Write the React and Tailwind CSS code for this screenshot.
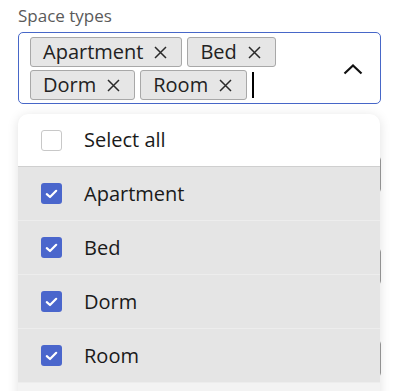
import React from "react";

const X = () => (
  <svg width="13" height="13" viewBox="0 0 13 13" className="ml-[11px] shrink-0">
    <path d="M1 1 L12 12 M12 1 L1 12" stroke="#2a2a2a" strokeWidth="1.5" fill="none" />
  </svg>
);

const Chip = ({ label }) => (
  <div className="flex items-center h-[30px] pl-[12px] pr-[14px] bg-[#e6e6e6] border border-[#a8a8a8] rounded-[3px] text-[20px] text-[#222]">
    <span className="leading-none">{label}</span>
    <X />
  </div>
);

const Check = ({ checked }) =>
  checked ? (
    <div className="w-[21px] h-[21px] rounded-[3px] bg-[#4a66cc] flex items-center justify-center">
      <svg width="13" height="10" viewBox="0 0 13 10">
        <path d="M1.8 5.2 L5 8 L11.2 1.8" stroke="white" strokeWidth="2.2" fill="none" strokeLinecap="round" strokeLinejoin="round" />
      </svg>
    </div>
  ) : (
    <div className="w-[21px] h-[21px] rounded-[3px] bg-white border border-[#c8c8c8]" />
  );

const Row = ({ label, checked, white }) => (
  <div
    className={
      "flex items-center pl-[23px] " +
      (white ? "bg-white border-b border-[#cfcfcf] h-[53px]" : "bg-[#e5e5e5] border-b border-[#ededed] h-[54px]")
    }
  >
    <Check checked={checked} />
    <span className="ml-[22px] text-[20px] text-[#1a1a1a]">{label}</span>
  </div>
);

export default function App() {
  return (
    <div
      className="w-[403px] h-[391px] bg-white overflow-hidden relative"
      style={{ fontFamily: '"Open Sans", "Noto Sans", sans-serif' }}
    >
      <div className="px-[18px] pr-[22px] pt-[5px]">
        <div className="text-[17px] text-[#5a5a5a] leading-[22px]">Space types</div>
        <div className="mt-[5px] h-[72px] border border-[#4767c8] rounded-[5px] flex items-start pl-[11px] pr-[17px] pt-[4px]">
          <div className="flex flex-wrap gap-x-[5px] gap-y-[3px] w-[300px] items-center">
            <Chip label="Apartment" />
            <Chip label="Bed" />
            <Chip label="Dorm" />
            <Chip label="Room" />
            <div className="w-[2px] h-[26px] bg-black" />
          </div>
          <div className="ml-auto mt-[27px]">
            <svg width="20" height="11" viewBox="0 0 20 11">
              <path d="M1.5 9.5 L10 1.5 L18.5 9.5" stroke="#111" strokeWidth="2.2" fill="none" />
            </svg>
          </div>
        </div>
        <div className="mt-[52px] flex flex-col gap-[55px]">
          <div className="h-[37px] border border-[#9a9a9a] rounded-[4px]" />
          <div className="h-[37px] border border-[#9a9a9a] rounded-[4px]" />
          <div className="h-[37px] border border-[#9a9a9a] rounded-[4px]" />
        </div>
      </div>
      <div className="absolute left-[18px] top-[114px] w-[362px] h-[300px] bg-[#f3f3f3] rounded-t-[10px] overflow-hidden shadow-[0_2px_12px_rgba(0,0,0,0.12)]">
        <Row label="Select all" white />
        <Row label="Apartment" checked />
        <Row label="Bed" checked />
        <Row label="Dorm" checked />
        <Row label="Room" checked />
      </div>
    </div>
  );
}
